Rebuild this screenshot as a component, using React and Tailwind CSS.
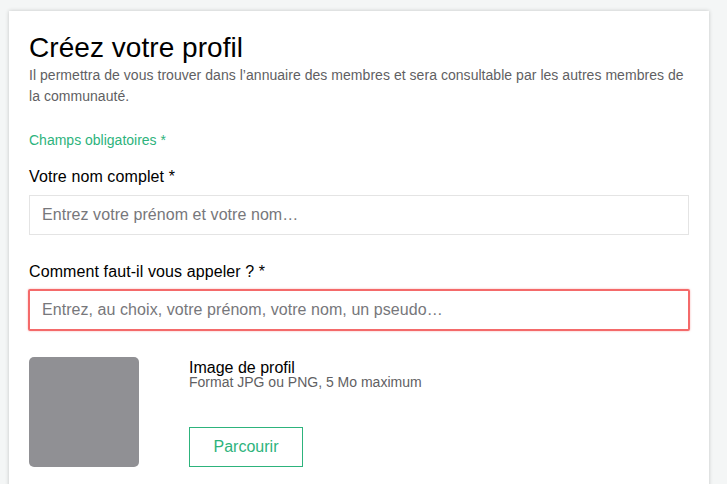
import React from "react";

const font = { sans: "font-['Liberation_Sans',Arial,sans-serif]" };

export default function App() {
  return (
    <div className={`h-[484px] overflow-hidden bg-[#f4f6f6] pt-[11px] pl-[9px] ${font.sans}`}>
      <div className="h-[500px] w-[700px] bg-white px-5 pt-5 shadow-[0_0_4px_rgba(0,0,0,0.2)]">
        <h1 className="text-[28px] leading-[34px] tracking-[0.05px] text-black">Créez votre profil</h1>
        <p className="text-sm leading-[21px] tracking-[0.04px] text-[#5f5f63]">
          Il permettra de vous trouver dans l’annuaire des membres et sera consultable par les autres membres de la communauté.
        </p>
        <p className="mt-[23px] text-sm leading-[21px] text-[#2db37c]">Champs obligatoires *</p>

        <label className="mt-4 block text-base leading-[20px] tracking-[0.1px] text-black">Votre nom complet *</label>
        <input
          placeholder="Entrez votre prénom et votre nom…"
          className="mt-2 block h-10 w-[660px] border border-[#e4e4e4] px-3 text-base tracking-[0.06px] outline-none placeholder:text-[#77777b]"
        />

        <label className="mt-[27px] block text-base leading-[20px] tracking-[0.1px] text-black">Comment faut-il vous appeler ? *</label>
        <input
          placeholder="Entrez, au choix, votre prénom, votre nom, un pseudo…"
          className="mt-[7px] -ml-px block h-[42px] w-[662px] rounded-[2px] border-2 border-[#f46a6a] px-3 text-base tracking-[0.06px] outline-none shadow-[0_0_2px_rgba(244,106,106,0.6)] placeholder:text-[#77777b]"
        />

        <div className="mt-[26px] flex">
          <div className="h-[110px] w-[110px] rounded-[5px] bg-[#909094]" />
          <div className="ml-[50px] flex h-[110px] flex-col">
            <div className="mt-[2px] text-base leading-[17px] text-black">Image de profil</div>
            <div className="-mt-[3px] text-sm leading-[18px] text-[#5f5f63]">Format JPG ou PNG, 5 Mo maximum</div>
            <button className="mt-auto h-10 w-[114px] border border-[#2db37c] text-base text-[#2db37c]">Parcourir</button>
          </div>
        </div>
      </div>
    </div>
  );
}
